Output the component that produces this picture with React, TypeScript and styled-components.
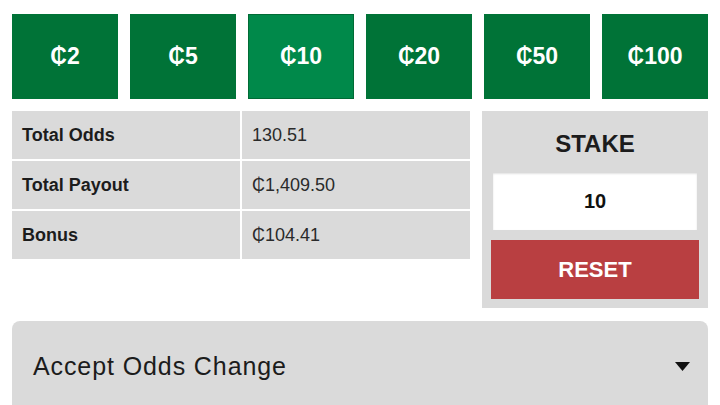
import React from "react";
import styled, { createGlobalStyle } from "styled-components";

const Global = createGlobalStyle`
  html, body { margin: 0; padding: 0; background: #ffffff; }
  body { font-family: "Liberation Sans", Arial, "DejaVu Sans", sans-serif; color: #1f1f1f; }
`;

const Page = styled.div`
  padding: 14px 12px 0;
  height: 405px;
  box-sizing: border-box;
  overflow: hidden;
  display: flex;
  flex-direction: column;
`;

const Chips = styled.div`
  display: grid;
  grid-template-columns: repeat(6, 1fr);
  gap: 12px;
`;

const Chip = styled.button<{ $active?: boolean }>`
  height: 85px;
  border: none;
  margin: 0;
  padding: 0;
  background: ${(p) => (p.$active ? "#00894a" : "#007337")};
  box-shadow: ${(p) => (p.$active ? "inset 0 0 0 1px #006b35" : "none")};
  color: #ffffff;
  font-family: "Liberation Sans", Arial, "DejaVu Sans", sans-serif;
  font-weight: 700;
  font-size: 23px;
  display: flex;
  align-items: center;
  justify-content: center;
`;

const Middle = styled.div`
  margin-top: 12px;
  display: grid;
  grid-template-columns: 458px 226px;
  gap: 12px;
  align-items: start;
`;

const Table = styled.div`
  display: grid;
  grid-template-columns: 1fr 1fr;
  column-gap: 2px;
  row-gap: 2px;
`;

const Cell = styled.div<{ $bold?: boolean }>`
  height: 48px;
  background: #dadada;
  display: flex;
  align-items: center;
  padding-left: 10px;
  font-size: 18px;
  font-weight: ${(p) => (p.$bold ? 700 : 400)};
  color: ${(p) => (p.$bold ? "#1c1c1c" : "#2a2a2a")};
`;

const StakePanel = styled.div`
  background: #dadada;
  height: 197px;
  box-sizing: border-box;
  padding: 0 9px 9px;
  display: flex;
  flex-direction: column;
  align-items: stretch;
`;

const StakeTitle = styled.div`
  height: 62px;
  display: flex;
  align-items: center;
  justify-content: center;
  font-size: 24px;
  font-weight: 700;
  color: #1c1c1c;
  padding-top: 3px;
  box-sizing: border-box;
`;

const StakeInput = styled.div`
  margin: 0 2px;
  height: 57px;
  background: #ffffff;
  box-shadow: inset 0 1px 2px rgba(0, 0, 0, 0.12);
  display: flex;
  align-items: center;
  justify-content: center;
  font-size: 20px;
  font-weight: 700;
  color: #111;
`;

const ResetButton = styled.button`
  margin-top: 10px;
  height: 59px;
  border: none;
  padding: 0;
  background: #b93f41;
  color: #ffffff;
  font-family: "Liberation Sans", Arial, sans-serif;
  font-size: 22px;
  font-weight: 700;
`;

const Dropdown = styled.div`
  margin-top: 13px;
  height: 110px;
  flex-shrink: 0;
  background: #dadada;
  border-radius: 8px;
  display: flex;
  align-items: flex-start;
  justify-content: space-between;
  padding: 30px 18px 0 21px;
  box-sizing: border-box;
`;

const DropLabel = styled.span`
  font-size: 25px;
  letter-spacing: 0.9px;
  color: #1c1c1c;
  line-height: 30px;
`;

const Caret = styled.svg`
  margin-top: 11px;
`;

const amounts = [2, 5, 10, 20, 50, 100];

const rows: [string, string][] = [
  ["Total Odds", "130.51"],
  ["Total Payout", "₵1,409.50"],
  ["Bonus", "₵104.41"],
];

export default function App() {
  return (
    <>
      <Global />
      <Page>
        <Chips>
          {amounts.map((a) => (
            <Chip key={a} $active={a === 10}>
              ₵{a}
            </Chip>
          ))}
        </Chips>
        <Middle>
          <Table>
            {rows.map(([k, v]) => (
              <React.Fragment key={k}>
                <Cell $bold>{k}</Cell>
                <Cell>{v}</Cell>
              </React.Fragment>
            ))}
          </Table>
          <StakePanel>
            <StakeTitle>STAKE</StakeTitle>
            <StakeInput>10</StakeInput>
            <ResetButton>RESET</ResetButton>
          </StakePanel>
        </Middle>
        <Dropdown>
          <DropLabel>Accept Odds Change</DropLabel>
          <Caret width="15" height="9" viewBox="0 0 15 9">
            <path d="M0 0 H15 L7.5 9 Z" fill="#111" />
          </Caret>
        </Dropdown>
      </Page>
    </>
  );
}
